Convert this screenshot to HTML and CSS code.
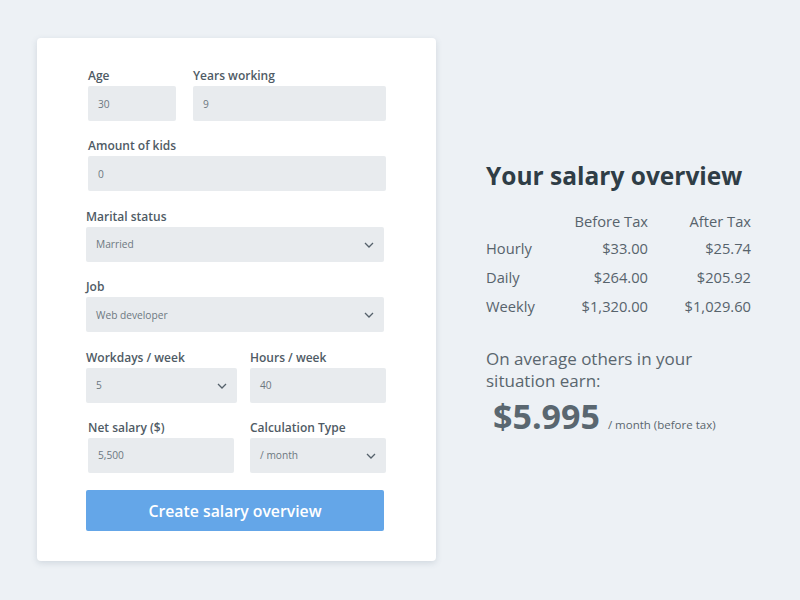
FILE: index.html
```html
<!DOCTYPE html>
<html>
<head>
<meta charset="utf-8">
<link rel="stylesheet" href="styles.css">
</head>
<body>
<div class="page">
  <form class="card">
    <div class="row off2">
      <div class="field w88"><label>Age</label><div class="input">30</div></div>
      <div class="field w193 gap17"><label>Years working</label><div class="input">9</div></div>
    </div>
    <div class="row off2">
      <div class="field w298"><label>Amount of kids</label><div class="input">0</div></div>
    </div>
    <div class="row">
      <div class="field w298"><label>Marital status</label><div class="input select">Married<svg class="chev" viewBox="0 0 10 6"><path d="M1 1l4 4 4-4"/></svg></div></div>
    </div>
    <div class="row">
      <div class="field w298"><label>Job</label><div class="input select">Web developer<svg class="chev" viewBox="0 0 10 6"><path d="M1 1l4 4 4-4"/></svg></div></div>
    </div>
    <div class="row">
      <div class="field w151"><label>Workdays / week</label><div class="input select">5<svg class="chev" viewBox="0 0 10 6"><path d="M1 1l4 4 4-4"/></svg></div></div>
      <div class="field w136 gap13"><label>Hours / week</label><div class="input">40</div></div>
    </div>
    <div class="row off2">
      <div class="field w146"><label>Net salary ($)</label><div class="input">5,500</div></div>
      <div class="field w136 gap16"><label>Calculation Type</label><div class="input select">/ month<svg class="chev" viewBox="0 0 10 6"><path d="M1 1l4 4 4-4"/></svg></div></div>
    </div>
    <button type="button" class="btn">Create salary overview</button>
  </form>

  <section class="overview">
    <h1>Your salary overview</h1>
    <div class="table">
      <span class="head"></span><span class="num head">Before Tax</span><span class="num head">After Tax</span>
      <span>Hourly</span><span class="num">$33.00</span><span class="num">$25.74</span>
      <span>Daily</span><span class="num">$264.00</span><span class="num">$205.92</span>
      <span>Weekly</span><span class="num">$1,320.00</span><span class="num">$1,029.60</span>
    </div>
    <p class="avg">On average others in your<br>situation earn:</p>
    <div class="big"><span class="amount">$5.995</span><span class="per">/ month (before tax)</span></div>
  </section>
</div>
</body>
</html>
```

FILE: styles.css
```css
* { box-sizing: border-box; }
html, body { margin: 0; padding: 0; }
body {
  background: #edf1f5;
  font-family: "Open Sans", "Noto Sans", sans-serif;
  width: 800px;
  height: 600px;
  overflow: hidden;
}
.page {
  display: flex;
  align-items: flex-start;
  padding: 38px 0 0 37px;
}
.card {
  width: 399px;
  background: #fff;
  border-radius: 4px;
  box-shadow: 0 2px 6px rgba(80, 100, 120, 0.18);
  padding: 31px 0 30px 49px;
  margin: 0;
  display: flex;
  flex-direction: column;
}
.row {
  display: flex;
  margin-bottom: 18.4px;
}
.off2 { padding-left: 2px; }
.field { display: flex; flex-direction: column; }
.field label {
  font-size: 12px;
  line-height: 14px;
  font-weight: 600;
  color: #4f5b65;
  margin-bottom: 3px;
  white-space: nowrap;
}
.w88 { width: 88px; }
.w193 { width: 193px; }
.w298 { width: 298px; }
.w151 { width: 151px; }
.w136 { width: 136px; }
.w146 { width: 146px; }
.gap17 { margin-left: 17px; }
.gap13 { margin-left: 13px; }
.gap16 { margin-left: 16px; }
.input {
  height: 35px;
  background: #e8ebee;
  border-radius: 2px;
  font-size: 10.2px;
  color: #6d7881;
  padding-left: 10px;
  display: flex;
  align-items: center;
  position: relative;
}
.chev {
  position: absolute;
  right: 10px;
  top: 15px;
  width: 10px;
  height: 6px;
  fill: none;
  stroke: #55616b;
  stroke-width: 1.3;
}
.btn {
  margin-top: -1px;
  width: 298px;
  height: 41px;
  border: none;
  border-radius: 2px;
  background: #64a6e8;
  color: #fff;
  font-family: "Open Sans", "Noto Sans", sans-serif;
  font-size: 15.8px;
  font-weight: 600;
  padding: 0;
}
.overview {
  margin-left: 50px;
  padding-top: 120px;
  color: #57636c;
}
.overview h1 {
  margin: 0;
  font-size: 24.5px;
  line-height: 36px;
  font-weight: 700;
  color: #2f3d46;
}
.table {
  margin-top: 18px;
  display: grid;
  grid-template-columns: 80px 82px 103px;
  row-gap: 6px;
  font-size: 14.7px;
  line-height: 23px;
}
.table .head { line-height: 19px; }
.num { text-align: right; }
.avg {
  margin: 30px 0 0;
  font-size: 17px;
  line-height: 22px;
  color: #5a666e;
}
.big {
  display: flex;
  align-items: baseline;
  padding-left: 7px;
  margin-top: 2px;
}
.amount {
  font-size: 34px;
  line-height: 44px;
  font-weight: 700;
  color: #5a6770;
}
.per {
  font-size: 11.5px;
  margin-left: 8px;
  color: #5a666e;
}
```
